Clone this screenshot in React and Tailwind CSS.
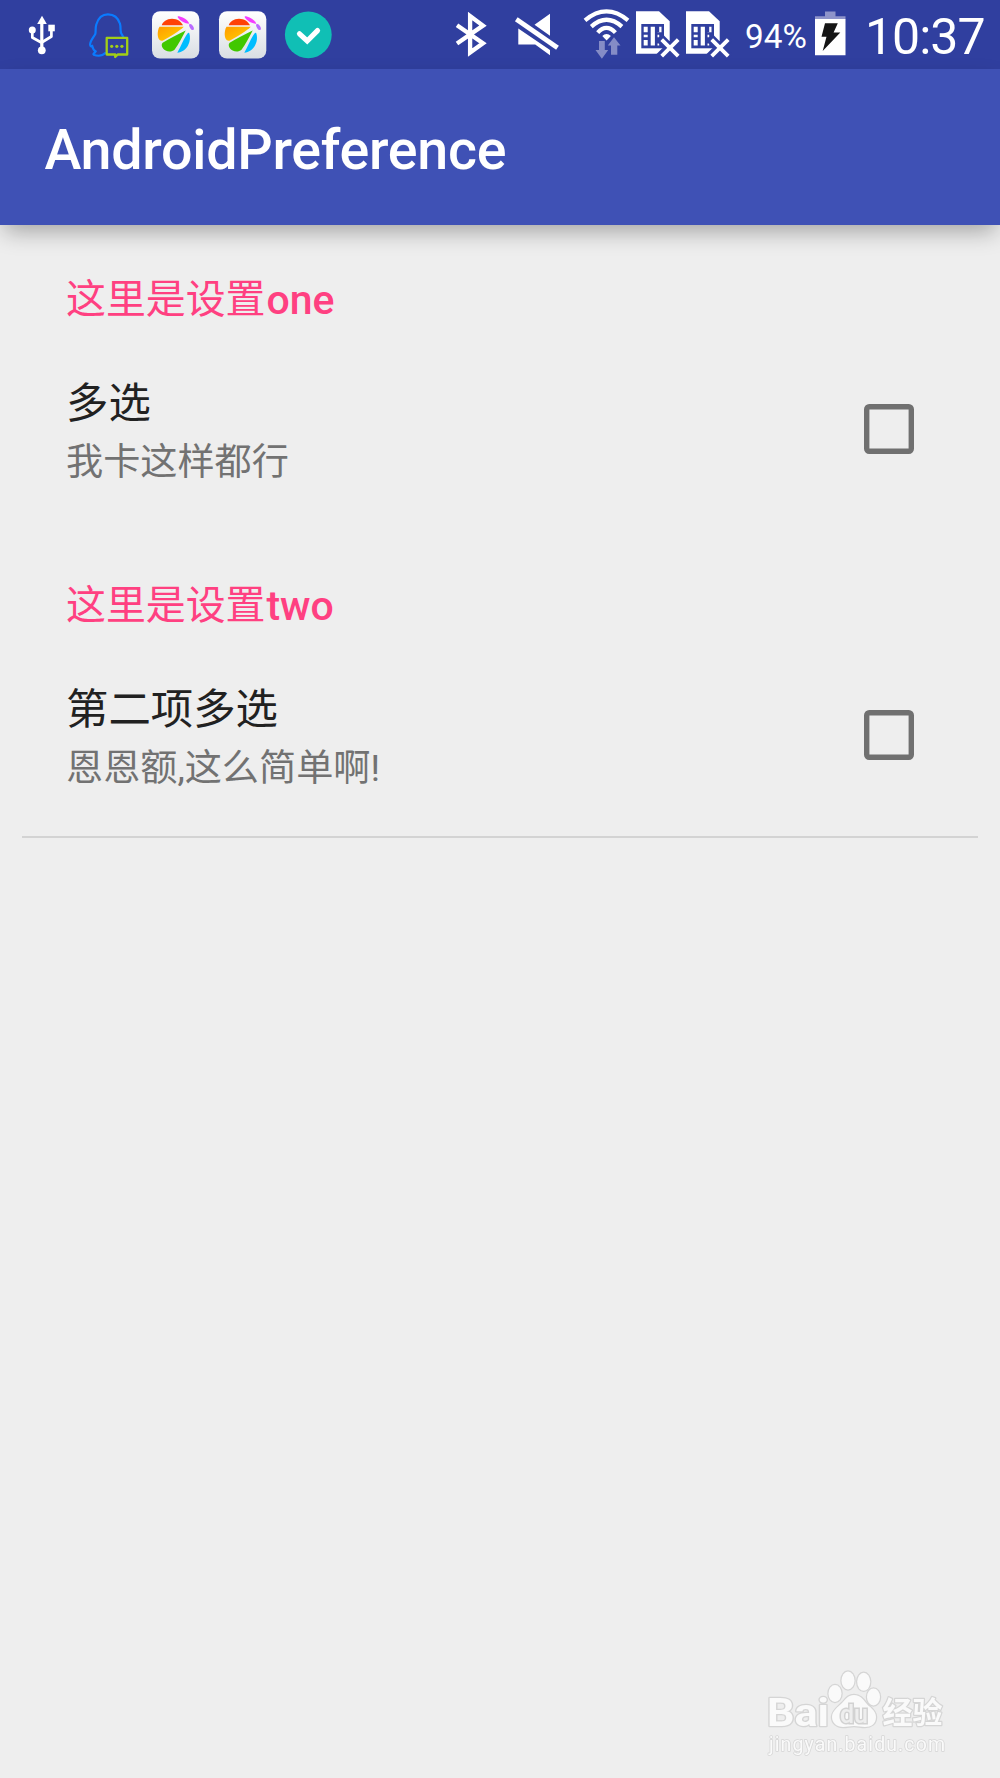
const BAR = "#303F9F";

function Glyph({ x, w, className = "", children }) {
  return (
    <svg
      viewBox={`${x} 0 ${w} 69`}
      width={w}
      height="69"
      className={`block shrink-0 ${className}`}
      fill="none"
      aria-hidden="true"
    >
      {children}
    </svg>
  );
}

function UsbIcon() {
  return (
    <Glyph x={0} w={80}>
      <g stroke="#fff" strokeWidth="2.7" strokeLinejoin="round">
        <path d="M41.8 20V50" strokeWidth="3.2" />
        <path d="M32.3 31v6.5l9 5M51.4 30v6.5l-9 5.5" />
      </g>
      <path d="M42 15.8l4.8 8.2h-9.6z" fill="#fff" />
      <circle cx="32.3" cy="30" r="3.5" fill="#fff" />
      <circle cx="41.8" cy="50.3" r="3.9" fill="#fff" />
      <rect x="48.3" y="24.7" width="6.5" height="6.6" fill="#fff" />
    </Glyph>
  );
}

function QQIcon() {
  return (
    <Glyph x={80} w={60}>
      <path
        d="M106 52.500c-3.500 3.300-8.500 3.800-12.300 2.200-1.200-.8 1.600-2 2-3.200-2-1.100-3-3.300-3.500-5.500-.8.3-2 1-2.100-1.500 0-3.500 3-6.500 5.200-10.500.7-2.500-.2-5.500 1-9.500 1.700-6 5.800-10.200 11.700-10.200s10.300 4 12 9.500c1.100 4-.1 6.500 1.200 9.500l2.500 4.500"
        stroke="#0A7BFF"
        strokeWidth="2.200"
      />
      <path
        d="M106.700 37.900h20.500v16.600h-9.500l-2.500 2.500v-2.500h-8.500z"
        fill={BAR}
        stroke="#A2CF16"
        strokeWidth="2.300"
        strokeLinejoin="round"
      />
      <g fill="#A2CF16">
        <circle cx="111.700" cy="46.300" r="1.600" />
        <circle cx="116.800" cy="46.300" r="1.600" />
        <circle cx="121.900" cy="46.300" r="1.600" />
      </g>
    </Glyph>
  );
}

function PetalAppIcon({ id }) {
  return (
    <Glyph x={140} w={66.5}>
      <defs>
        <linearGradient id={`${id}-tile`} x1="0" y1="0" x2="0" y2="1">
          <stop offset="0" stopColor="#fff" />
          <stop offset="1" stopColor="#d9dee3" />
        </linearGradient>
        <linearGradient id={`${id}-gold`} x1="0" y1="0" x2="1" y2="1">
          <stop offset="0" stopColor="#ff9a00" />
          <stop offset="1" stopColor="#ffd600" />
        </linearGradient>
      </defs>
      <rect x="152" y="11.2" width="47.300" height="47.300" rx="8" fill={`url(#${id}-tile)`} />
      <path d="M161.700 25.300c1-3.500 5-6.500 10.300-6.500s9 2.800 11 6.500z" fill="#ff4106" />
      <path d="M159.500 26.700h24.300c-4.500 4.300-12.300 9.300-20.800 13.800-3.500 1.300-5.300-2.500-5.300-6.500 0-3 .7-5.200 1.800-7.300z" fill={`url(#${id}-gold)`} />
      <path d="M162.700 42.700c7.300-4.200 14.800-8.200 23-12.200-3.200 6-7 13.500-11.200 19.200-3.500 3.200-9.500 1.800-11.800-1.700-1.300-2.200-1.300-4.200 0-5.300z" fill="#41c800" />
      <path d="M189.200 33c1.300 3.500 1.100 8.500-1.200 12.500-2.200 4-6 6.800-10.700 7.300 3.500-6 7-15.500 10.400-19.500.5-.6 1.200-.7 1.500-.3z" fill="#00bdff" />
      <path d="M177.600 17c-.1-1 1.200-.9 2.200-.5 4 1.200 8 3.300 9.500 7.200-4.500-.1-9.300-2.700-11.700-6.700z" fill="#f53dff" />
      <ellipse cx="191.500" cy="27" rx="1.700" ry="3.400" transform="rotate(-32 191.500 27)" fill="#b96bff" />
    </Glyph>
  );
}

function CheckBadge() {
  return (
    <Glyph x={273} w={70}>
      <circle cx="308.300" cy="34.800" r="23.400" fill="#10BFB5" />
      <path d="M299.500 33.800l7.700 7.200 10.300-10.400" stroke="#fff" strokeWidth="5.200" strokeLinecap="round" />
    </Glyph>
  );
}

function BluetoothIcon() {
  return (
    <Glyph x={440} w={60}>
      <path d="M457 25.200l26 18-12.900 9.400V16l12.900 9.600-26 17.900" stroke="#fff" strokeWidth="4.300" />
    </Glyph>
  );
}

function MuteIcon() {
  return (
    <Glyph x={500} w={70}>
      <path d="M534.500 24.800L550 13.800v22zM518.300 28.500L550 50v5.300l-14.800-10.800h-16.900z" fill="#fff" />
      <path d="M516.500 19.500l41 28.500" stroke={BAR} strokeWidth="9" />
      <path d="M516.300 19.300l41.200 28.500" stroke="#fff" strokeWidth="4.800" />
    </Glyph>
  );
}

function WifiIcon() {
  return (
    <Glyph x={570} w={62}>
      <g stroke="#fff" strokeWidth="4.200">
        <path d="M585 20.300q21.400-17.800 43 0" />
        <path d="M591.300 26.600q15.200-13.600 30.600 0" />
        <path d="M597.700 32.600q8.700-9.400 17.700 0" />
      </g>
      <path d="M602.300 36c2.500-2.700 6-2.700 8.600 0l-4.300 4.500z" fill="#fff" />
      <path d="M599 41h5.800v9h3.400l-6.300 8.700-6.400-8.700h3.500zM611 54.700v-9.200h-3.200l6.200-8.200 6.500 8.200h-3.200v9.200z" fill="#858CC6" />
    </Glyph>
  );
}

function SimIcon() {
  return (
    <Glyph x={632} w={50}>
      <path d="M636 11.300h23l10.700 10v32.400H636z" fill="#fff" />
      <path d="M641.300 24H664v24.300h-22.700z" fill={BAR} />
      <path d="M643.700 26.700h4v5.600h-4zM643.700 34.700h4v2.600h-4zM643.700 40h4v5.600h-4zM650.700 26.700h4.200v18.900h-4.200zM657.500 32h1.700v-5.300h2.300v5.600h-4zM657.500 34.700h1.700v2.600h-1.700zM657.500 43.500h1.700v2.100h-1.700z" fill="#fff" />
      <path d="M659.500 37.500l20 20M679.500 37.500l-20 20" stroke={BAR} strokeWidth="9" />
      <path d="M661.700 39.700l16.500 16.500M678.200 39.700l-16.500 16.500" stroke="#fff" strokeWidth="3.800" />
    </Glyph>
  );
}

function BatteryIcon() {
  return (
    <Glyph x={810} w={40}>
      <path d="M825 11.500h10.500v4.800h10v3H815v-3h10z" fill="#8E94CA" />
      <path d="M815 19h30.500v36.300H815z" fill="#fff" />
      <path d="M825 23.200h12.800l-4.200 9.300h6.700l-17.600 18.600 3.800-14.300h-5z" fill="#151515" />
    </Glyph>
  );
}

function StatusBar() {
  return (
    <div className="flex h-[69px] shrink-0 items-center justify-between bg-[#303F9F] text-white">
      <div className="flex">
        <UsbIcon />
        <QQIcon />
        <PetalAppIcon id="app-a" />
        <PetalAppIcon id="app-b" />
        <CheckBadge />
      </div>
      <div className="flex items-center">
        <BluetoothIcon />
        <MuteIcon />
        <WifiIcon />
        <SimIcon />
        <SimIcon />
        <span className="w-[78px] pt-[5px] pl-[13px] text-[33.3px] leading-none whitespace-nowrap">94%</span>
        <BatteryIcon />
        <span className="w-[150px] pt-[4px] pl-[15px] text-[50px] leading-none tracking-[-1px] whitespace-nowrap">10:37</span>
      </div>
    </div>
  );
}

function PreferenceCategory({ label, suffix }) {
  return (
    <h2 className="flex h-[60px] items-center pl-[66px] text-[#FF4081]">
      <span className="text-[39.900px] leading-none">{label}</span>
      <span className="pl-px text-[41px] leading-none font-medium">{suffix}</span>
    </h2>
  );
}

function CheckBoxPreference({ title, summary }) {
  return (
    <div className="mt-[29px] flex h-[140px] items-center justify-between pr-[86px] pl-[66px]">
      <div className="flex flex-col pt-[9px]">
        <span className="h-[59px] text-[42.400px] leading-[58px] text-[#212121]">{title}</span>
        <span className="h-[58px] text-[37.150px] leading-[58px] text-[#727272]">{summary}</span>
      </div>
      <svg role="checkbox" aria-checked="false" viewBox="0 0 50 50" className="size-[50px]" fill="none">
        <rect x="2.700" y="2.700" width="44.600" height="44.600" rx="2.500" stroke="#707070" strokeWidth="5.400" />
      </svg>
    </div>
  );
}

function Watermark() {
  return (
    <svg viewBox="750 1660 220 118" width="220" height="118" className="fixed right-[30px] bottom-0" fill="#FAFAFA">
      <g stroke="#D5D5D5" strokeWidth="2.500" paintOrder="stroke" strokeLinejoin="round">
        <text x="767" y="1725.500" fontSize="38" fontWeight="700" textLength="62" lengthAdjust="spacingAndGlyphs">Bai</text>
        <ellipse cx="835" cy="1693.500" rx="6.500" ry="8.500" />
        <ellipse cx="848" cy="1680.500" rx="6.500" ry="9" />
        <ellipse cx="863.700" cy="1681.800" rx="6.500" ry="9" />
        <ellipse cx="873.500" cy="1697" rx="6.500" ry="8.500" />
        <path d="M854 1695c6 0 9 4 12 8s10 7 10 14-5 10-11 10c-4 0-7-1-11-1s-7 1-11 1c-6 0-11-4-11-10s6-10 10-14 6-8 12-8z" />
        <text x="882.500" y="1723" fontSize="30" fontWeight="700" textLength="60" lengthAdjust="spacingAndGlyphs">经验</text>
        <text x="769" y="1750.500" fontSize="19.500" textLength="176" strokeWidth="1.500">jingyan.baidu.com</text>
      </g>
      <text x="840" y="1722.500" fontSize="25" fontWeight="500" textLength="28" lengthAdjust="spacingAndGlyphs" fill="#EEEEEE" stroke="#D2D2D2" strokeWidth="3" paintOrder="stroke">du</text>
    </svg>
  );
}

export default function App() {
  return (
    <div className="flex h-[1778px] w-[1000px] flex-col overflow-hidden bg-[#EEEEEE] font-[Roboto,'Noto_Sans_CJK_SC',sans-serif]">
      <StatusBar />
      <header className="flex h-[156px] shrink-0 items-center bg-[#3F51B5] pt-[7px] pl-[44.500px] shadow-[0_10px_22px_-4px_rgba(0,0,0,0.32)]">
        <h1 className="text-[55.600px] leading-none font-medium tracking-[-0.280px] text-white">AndroidPreference</h1>
      </header>
      <main className="flex flex-col px-0 pt-[45px]">
        <section className="h-[306px]">
          <PreferenceCategory label="这里是设置" suffix="one" />
          <CheckBoxPreference title="多选" summary="我卡这样都行" />
        </section>
        <section className="mx-0 h-[260px]">
          <PreferenceCategory label="这里是设置" suffix="two" />
          <CheckBoxPreference title="第二项多选" summary="恩恩额,这么简单啊!" />
        </section>
        <hr className="mx-[22px] border-t-2 border-[#D3D3D3]" />
      </main>
      <Watermark />
    </div>
  );
}
